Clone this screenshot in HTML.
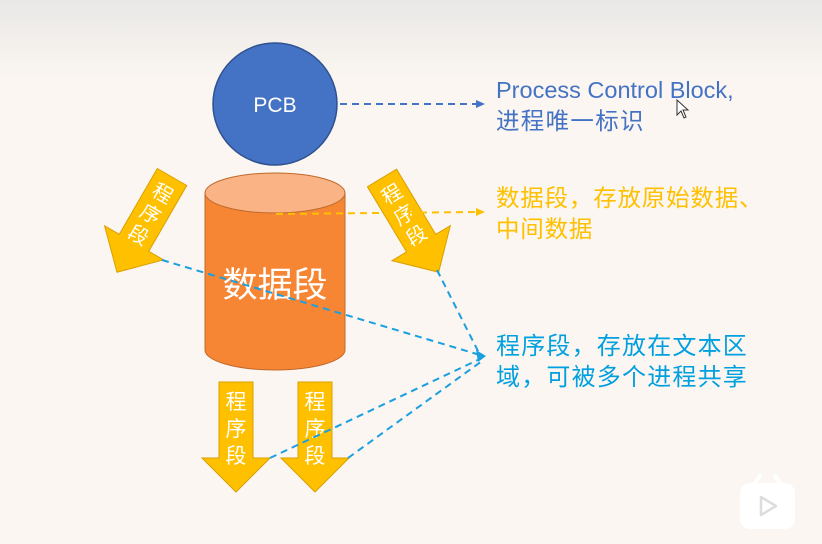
<!DOCTYPE html>
<html><head><meta charset="utf-8"><style>
html,body{margin:0;padding:0;width:822px;height:544px;overflow:hidden;background:#fbf6f1}
svg{display:block}
text{font-family:"Liberation Sans","Noto Sans CJK SC",sans-serif}
</style></head><body>
<svg width="822" height="544" viewBox="0 0 822 544">
<defs>
<linearGradient id="tg" x1="0" y1="0" x2="0" y2="1">
<stop offset="0" stop-color="#e9e8e6"/><stop offset="1" stop-color="#fbf6f1"/>
</linearGradient>
<g id="arr">
<path d="M-17,0 L17,0 L17,76 L34,76 L0,110 L-34,76 L-17,76 Z" fill="#ffc000" stroke="#d9a000" stroke-width="1"/>
</g>
</defs>
<rect width="822" height="80" fill="url(#tg)"/>
<ellipse cx="275" cy="104" rx="62" ry="61" fill="#4472c4" stroke="#2f528f" stroke-width="1.5"/>
<text x="275" y="112" font-size="21" fill="#fff" text-anchor="middle">PCB</text>
<path d="M205,193 L205,350 A70,20 0 0 0 345,350 L345,193 Z" fill="#f68634" stroke="#c0692a" stroke-width="1"/>
<ellipse cx="275" cy="193" rx="70" ry="20" fill="#f9b384" stroke="#c0692a" stroke-width="1"/>
<text x="275" y="297" font-size="35" fill="#fff" text-anchor="middle">数据段</text>
<g transform="translate(172,177) rotate(30)"><use href="#arr"/>
<text x="0" y="26" font-size="20" fill="#fff" text-anchor="middle">程</text>
<text x="0" y="50" font-size="20" fill="#fff" text-anchor="middle">序</text>
<text x="0" y="74" font-size="20" fill="#fff" text-anchor="middle">段</text></g>
<g transform="translate(382,178) rotate(-31)"><use href="#arr"/>
<text x="0" y="26" font-size="20" fill="#fff" text-anchor="middle">程</text>
<text x="0" y="50" font-size="20" fill="#fff" text-anchor="middle">序</text>
<text x="0" y="74" font-size="20" fill="#fff" text-anchor="middle">段</text></g>
<g transform="translate(236,382)"><use href="#arr"/>
<text x="0" y="27" font-size="21" fill="#fff" text-anchor="middle">程</text>
<text x="0" y="54" font-size="21" fill="#fff" text-anchor="middle">序</text>
<text x="0" y="81" font-size="21" fill="#fff" text-anchor="middle">段</text></g>
<g transform="translate(315,382)"><use href="#arr"/>
<text x="0" y="27" font-size="21" fill="#fff" text-anchor="middle">程</text>
<text x="0" y="54" font-size="21" fill="#fff" text-anchor="middle">序</text>
<text x="0" y="81" font-size="21" fill="#fff" text-anchor="middle">段</text></g>
<g fill="none" stroke-width="2" stroke-dasharray="7,5">
<line x1="340" y1="104" x2="476" y2="104" stroke="#4472c4"/>
<line x1="276" y1="214" x2="476" y2="212" stroke="#ffc000"/>
<g stroke="#1aa0e0">
<line x1="162" y1="260" x2="480" y2="355"/>
<line x1="437" y1="270" x2="480" y2="355"/>
<line x1="270" y1="458" x2="482" y2="358"/>
<line x1="348" y1="458" x2="482" y2="361"/>
</g></g>
<path d="M476,100 L485,104 L476,108 Z" fill="#4472c4"/>
<path d="M476,208 L485,212 L476,216 Z" fill="#ffc000"/>
<path d="M476,350 L486,356 L478,362 Z" fill="#1aa0e0"/>
<text x="496" y="98" font-size="23.5" fill="#4472c4">Process Control Block,</text>
<text x="496" y="129" font-size="23.5" fill="#4472c4" letter-spacing="1.3">进程唯一标识</text>
<text x="496" y="206" font-size="23.5" fill="#ffc000" letter-spacing="0.8">数据段，存放原始数据、</text>
<text x="496" y="237" font-size="23.5" fill="#ffc000" letter-spacing="0.8">中间数据</text>
<text x="496" y="354" font-size="24" fill="#00a0e0" letter-spacing="1.2">程序段，存放在文本区</text>
<text x="496" y="385" font-size="24" fill="#00a0e0" letter-spacing="1.2">域，可被多个进程共享</text>
<path d="M677,100 L677,115 L681,111 L684,118 L686,117 L683,110 L688,110 Z" fill="#fff" stroke="#333" stroke-width="1"/>
<g>
<rect x="740" y="483" width="55" height="46" rx="10" fill="#fff"/>
<path d="M754,484 L760,476 M781,484 L775,476" stroke="#fff" stroke-width="4" stroke-linecap="round"/>
<path d="M761,497 L761,515 L776,506 Z" fill="none" stroke="#ddd" stroke-width="2.5" stroke-linejoin="round"/>
</g>
</svg>
</body></html>
